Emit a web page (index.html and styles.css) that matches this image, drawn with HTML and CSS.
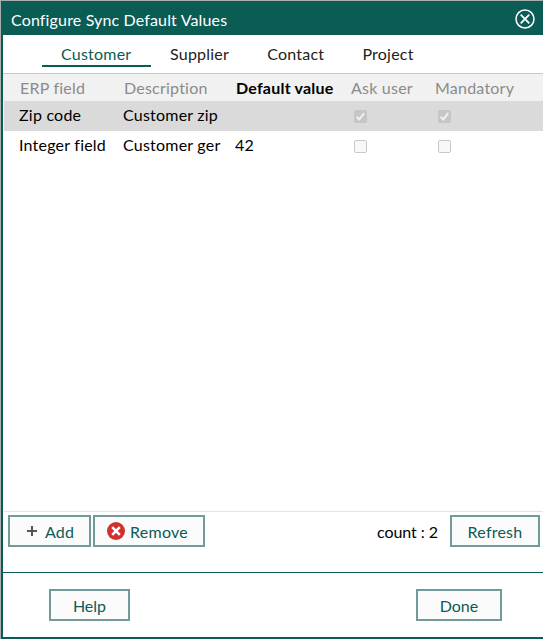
FILE: index.html
```html
<!DOCTYPE html>
<html lang="en">
<head>
<meta charset="utf-8">
<title>Configure Sync Default Values</title>
<link rel="stylesheet" href="styles.css">
</head>
<body>
<div class="dialog">
  <header class="titlebar">
    <h1>Configure Sync Default Values</h1>
    <svg class="close" width="20" height="20" viewBox="0 0 20 20" fill="none" stroke="#fff"><circle cx="10" cy="10" r="9" stroke-width="1.5"/><path d="M5.7 5.7l8.6 8.6M14.3 5.7l-8.6 8.6" stroke-width="1.8"/></svg>
  </header>
  <nav class="tabs">
    <a class="tab active">Customer</a>
    <a class="tab">Supplier</a>
    <a class="tab">Contact</a>
    <a class="tab">Project</a>
  </nav>
  <main class="grid">
    <div class="row head"><span>ERP field</span><span>Description</span><span class="strong">Default value</span><span>Ask user</span><span>Mandatory</span></div>
    <div class="row selected"><span>Zip code</span><span>Customer zip</span><span></span>
      <span class="check"><svg class="box" width="13" height="13" viewBox="0 0 13 13"><rect width="13" height="13" rx="1.5" fill="#c6c6c6"/><path d="M2.7 6.8l2.5 2.6 5-6.3" fill="none" stroke="#f0f0f0" stroke-width="2"/></svg></span>
      <span class="check"><svg class="box" width="13" height="13" viewBox="0 0 13 13"><rect width="13" height="13" rx="1.5" fill="#c6c6c6"/><path d="M2.7 6.8l2.5 2.6 5-6.3" fill="none" stroke="#f0f0f0" stroke-width="2"/></svg></span>
    </div>
    <div class="row"><span>Integer field</span><span>Customer ger</span><span>42</span>
      <span class="check"><i class="box empty"></i></span><span class="check"><i class="box empty"></i></span>
    </div>
  </main>
  <div class="toolbar">
    <button class="btn add"><svg width="10" height="10" viewBox="0 0 10 10"><path d="M5 0v10M0 5h10" stroke="#555" stroke-width="2"/></svg>Add</button>
    <button class="btn remove"><svg width="18" height="18" viewBox="0 0 18 18"><circle cx="9" cy="9" r="9" fill="#d0312d"/><path d="M5.2 5.2l7.6 7.6M12.8 5.2l-7.6 7.6" stroke="#fff" stroke-width="2.6"/></svg>Remove</button>
    <span class="count">count : 2</span>
    <button class="btn refresh">Refresh</button>
  </div>
  <footer class="footer">
    <button class="btn help">Help</button>
    <button class="btn done">Done</button>
  </footer>
</div>
</body>
</html>
```
FILE: styles.css
```css
* { box-sizing: border-box; }
body {
  margin: 0;
  height: 639px;
  padding: 1px 0 0 1px;
  background: #a9adac;
  font: 16px/20px Lato, sans-serif;
  letter-spacing: 0.22px;
  color: #000;
  overflow: hidden;
}
.dialog {
  height: 638px;
  display: flex;
  flex-direction: column;
  background: #fff;
  border-left: 2px solid #0a5c55;
  border-bottom: 2px solid #0a5c55;
}
.titlebar {
  height: 34px;
  margin-left: -2px;
  padding: 2px 8px 0 10px;
  display: flex;
  justify-content: space-between;
  align-items: center;
  background: #0a5c55;
  color: #fff;
}
h1 { margin: 2px 0 0; font-size: 16px; font-weight: 400; letter-spacing: 0.15px; }
.tabs {
  height: 39px;
  padding-left: 39px;
  display: flex;
  border-bottom: 1px solid #c8c8c8;
  color: #222;
}
.tab { height: 32px; padding: 9px 19.2px 0 19px; }
.tab.active {
  width: 109px;
  color: #0a5c55;
  border-bottom: 2px solid #0a5c55;
}
.grid { flex: 1; }
.row {
  height: 30px;
  margin-left: 1px;
  padding: 0 0 2px 15px;
  display: grid;
  grid-template-columns: 104px 112px 115px 84px 1fr;
  align-items: center;
  white-space: nowrap;
}
.head { height: 27px; margin-left: 0; padding: 1px 0 0 17px; background: #f1f1f1; color: #8b8b8b; }
.head .strong { color: #000; font-weight: 700; }
.selected { background: #dadada; }
.check { padding: 3px 0 0 4px; }
.box { display: block; width: 13px; height: 13px; }
.empty { border: 1px solid #c8c8c8; border-radius: 2px; background: #f8f8f8; }
.toolbar {
  height: 61px;
  margin-left: 1px;
  padding: 3px 3px 0 4px;
  display: flex;
  align-items: flex-start;
  border-top: 1px solid #e4e4e4;
}
.btn {
  height: 32px;
  margin: 0;
  padding: 2px 0 0;
  display: flex;
  align-items: center;
  justify-content: center;
  border: 2px solid #719b98;
  background: #fbfbfb;
  color: #0a5c55;
  font: inherit;
  letter-spacing: inherit;
}
.add { width: 83px; gap: 8px; padding-left: 2px; }
.add svg { margin-top: -2px; }
.remove { width: 112px; margin-left: 2px; gap: 5px; padding-right: 3px; }
.remove svg { margin-top: -2px; }
.count { margin: 7px 12px 0 auto; letter-spacing: -0.05px; }
.refresh { width: 90px; }
.footer {
  height: 65px;
  padding: 16px 41px 0 46px;
  display: flex;
  justify-content: space-between;
  border-top: 1px solid #0a5c55;
}
.help { width: 81px; }
.done { width: 86px; }
.footer .btn { letter-spacing: 0; }
```
